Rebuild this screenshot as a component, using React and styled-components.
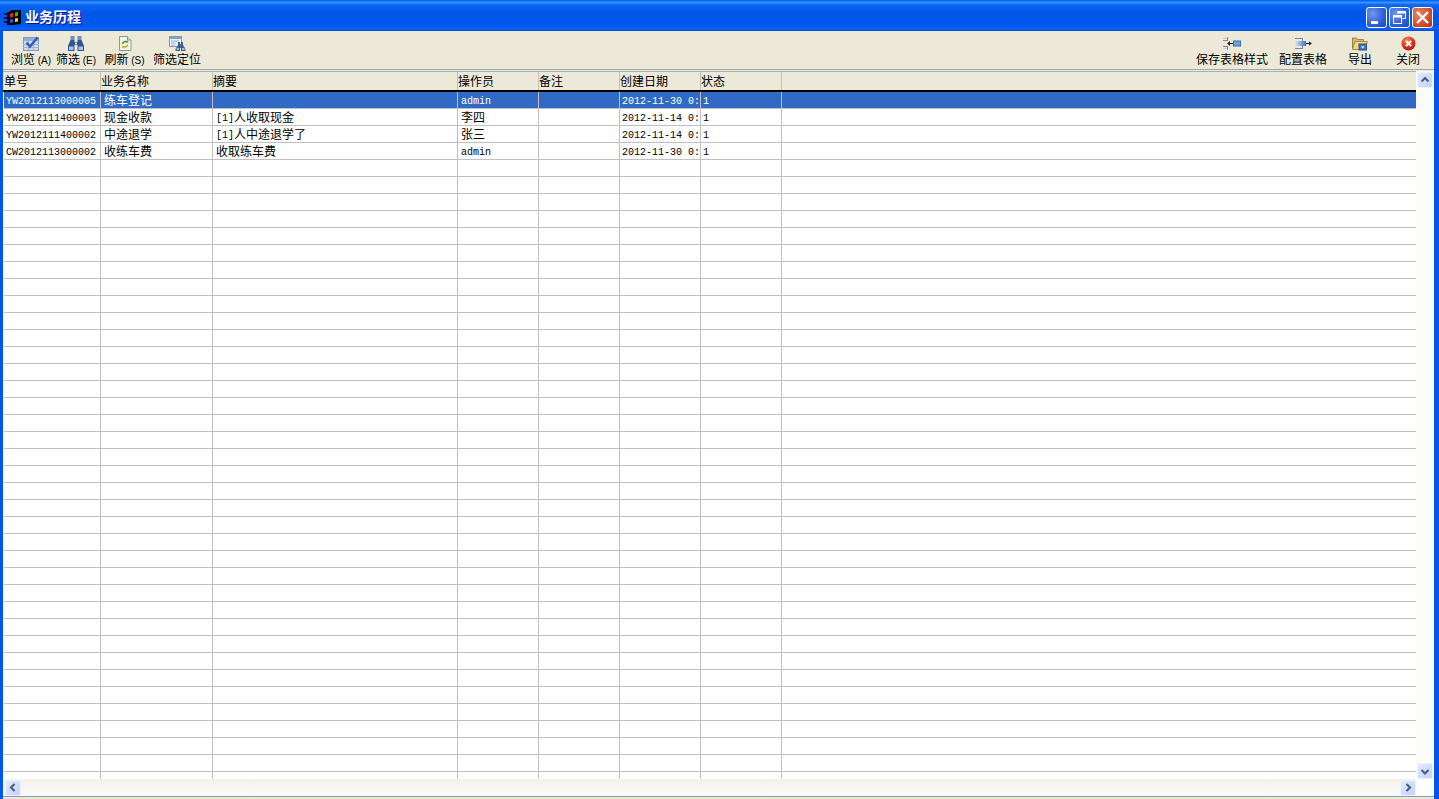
import styled, { createGlobalStyle } from 'styled-components'

const GlobalStyle = createGlobalStyle`
  html, body { margin: 0; padding: 0; height: 100%; overflow: hidden; }
  body { font-family: "Noto Sans CJK SC", "Liberation Sans", sans-serif; font-size: 12px; color: #000; }
`

const columns = [
  { key: 'no', title: '单号', width: 97, pad: 2 },
  { key: 'name', title: '业务名称', width: 112, pad: 3 },
  { key: 'memo', title: '摘要', width: 245, pad: 3 },
  { key: 'op', title: '操作员', width: 81, pad: 3 },
  { key: 'note', title: '备注', width: 81, pad: 2 },
  { key: 'date', title: '创建日期', width: 81, pad: 2 },
  { key: 'state', title: '状态', width: 81, pad: 2 },
]

const rows = [
  { no: 'YW2012113000005', name: '练车登记', memo: '', op: 'admin', note: '', date: '2012-11-30 0:', state: '1' },
  { no: 'YW2012111400003', name: '现金收款', memo: '[1]人收取现金', op: '李四', note: '', date: '2012-11-14 0:', state: '1' },
  { no: 'YW2012111400002', name: '中途退学', memo: '[1]人中途退学了', op: '张三', note: '', date: '2012-11-14 0:', state: '1' },
  { no: 'CW2012113000002', name: '收练车费', memo: '收取练车费', op: 'admin', note: '', date: '2012-11-30 0:', state: '1' },
]

const emptyRows = Array.from({ length: 37 }, (_, i) => i)

// latin parts are set in a 6px-per-char mono so they line up with the cjk text
function Mixed({ text }) {
  const parts = text.split(/([\x20-\x7e]+)/).filter(Boolean)
  return parts.map((p, i) => (/^[\x20-\x7e]+$/.test(p) ? <Latin key={i}>{p}</Latin> : <span key={i}>{p}</span>))
}

const AppIcon = () => (
  <svg width="17" height="15" viewBox="0 0 17 15">
    <path d="M3 3 L8 0 L17 0 L17 14 L9 15 L3 15 Z" fill="#000" />
    <path d="M0 3h3v2H0zM0 7h3v2H0zM0 11h3v2H0z" fill="#0a1a70" />
    <path d="M6 4 L9 2.500 L9 7 L6 7.500 Z" fill="#d8301c" />
    <path d="M11 2.500 L14 2 L14 6 L11 6.500 Z" fill="#30b040" />
    <path d="M6 9.500 L9 9 L9 12.500 L6 13 Z" fill="#2458e0" />
    <path d="M11 8.500 L14 8 L14 11.500 L11 12 Z" fill="#f4dc20" />
  </svg>
)

const BrowseIcon = () => (
  <svg width="16" height="15" viewBox="0 0 16 15">
    <rect x="0.500" y="1.500" width="15" height="13" fill="#cfdcf0" stroke="#7f9db9" />
    <rect x="1" y="2" width="14" height="3" fill="#8fb0dc" />
    <path d="M0 8.500h16M0 11.500h16M5.500 2v12M10.500 2v12" stroke="#9db4d4" />
    <path d="M3.500 6.500 L7 10.500 L14.500 1.500" fill="none" stroke="#3a5fb0" strokeWidth="2.600" />
  </svg>
)

const BinocularsIcon = () => (
  <svg width="16" height="15" viewBox="0 0 16 15">
    <rect x="2.500" y="0" width="4" height="4" fill="#6f8db8" />
    <rect x="9.500" y="0" width="4" height="4" fill="#6f8db8" />
    <path d="M2.500 4h4v2h3V4h4l2.500 6v5H9.500V9h-3v6H0v-5z" fill="#34568e" />
    <rect x="1" y="10.500" width="4.500" height="3.500" fill="#a8c4ea" />
    <rect x="10.500" y="10.500" width="4.500" height="3.500" fill="#a8c4ea" />
    <rect x="7" y="6.500" width="2" height="2" fill="#ccd6e6" />
  </svg>
)

const RefreshIcon = () => (
  <svg width="14" height="15" viewBox="0 0 14 15">
    <path d="M1.500 0.500h8l3.500 3.500v10.500h-11.500z" fill="#f4f4e6" stroke="#8a9a8a" />
    <path d="M9.500 0.500v3.500h3.500" fill="#dfe3d2" stroke="#8a9a8a" />
    <path d="M4.500 8a2.600 2.600 0 0 1 4.400-1.700" fill="none" stroke="#3f9a2a" strokeWidth="1.600" />
    <path d="M9.600 8.600a2.600 2.600 0 0 1-4.400 1.600" fill="none" stroke="#c9a92a" strokeWidth="1.600" />
    <path d="M8 4.800h2.200v2.400z" fill="#3f9a2a" />
    <path d="M6 11.800H3.800V9.400z" fill="#c9a92a" />
  </svg>
)

const LocateIcon = () => (
  <svg width="17" height="15" viewBox="0 0 17 15">
    <rect x="0.500" y="0.500" width="12" height="10" fill="#eef3fa" stroke="#7f9db9" />
    <rect x="1" y="1" width="11" height="2" fill="#7f9fd0" />
    <path d="M2 5h8M2 7h5M2 9h4" stroke="#9fb4d0" />
    <path d="M9 6h2v2h1V6h2v3l2.500 4v2H12v-3h-1v3H6.500v-2L9 9z" fill="#3d5f96" />
    <rect x="7.500" y="12" width="2.500" height="2" fill="#9fbbe0" />
    <rect x="13" y="12" width="2.500" height="2" fill="#9fbbe0" />
  </svg>
)

const SaveStyleIcon = () => (
  <svg width="18" height="13" viewBox="0 0 18 13">
    <path d="M0 3.500h5M4.500 0v3.500M0 9.500h5M4.500 9.500V13" stroke="#7d8796" />
    <path d="M0 1.500h4M0 11.500h4" stroke="#c3cad4" />
    <path d="M5 6.500h5" stroke="#222" />
    <path d="M4 6.500l3-2.500v5z" fill="#222" />
    <rect x="10.500" y="4" width="7" height="5" fill="#6f9fdc" stroke="#3d6cae" />
  </svg>
)

const ConfigIcon = () => (
  <svg width="17" height="13" viewBox="0 0 17 13">
    <path d="M0 1.500h8M7.500 1v4M0 11.500h8M7.500 9v3" stroke="#7d8796" />
    <defs>
      <linearGradient id="cfgbar" x1="0" x2="1" y1="0" y2="0">
        <stop offset="0" stopColor="#dfe9f7" />
        <stop offset="1" stopColor="#3f74bf" />
      </linearGradient>
    </defs>
    <rect x="0" y="4" width="11" height="5" fill="url(#cfgbar)" />
    <path d="M11 6.500h4" stroke="#222" />
    <path d="M17 6.500l-3-2v4z" fill="#222" />
  </svg>
)

const ExportIcon = () => (
  <svg width="16" height="14" viewBox="0 0 16 14">
    <path d="M0.500 13V1.500h4l1 1.500h6v2" fill="#d6b676" stroke="#9a8150" />
    <path d="M0.500 13l2.500-8h12.500l-3 8z" fill="#f8d77c" stroke="#a98a45" />
    <rect x="7" y="7.500" width="7.500" height="6" fill="#3f74c4" stroke="#2a4f8e" />
    <path d="M9 10h3.500l-1.750 2z" fill="#fff" />
  </svg>
)

const CloseIcon = () => (
  <svg width="15" height="15" viewBox="0 0 15 15">
    <defs>
      <radialGradient id="closered" cx="0.400" cy="0.300" r="0.800">
        <stop offset="0" stopColor="#f58a6a" />
        <stop offset="0.550" stopColor="#d8341c" />
        <stop offset="1" stopColor="#a01808" />
      </radialGradient>
    </defs>
    <circle cx="7.500" cy="7.500" r="7" fill="url(#closered)" />
    <path d="M5 5l5 5M10 5l-5 5" stroke="#fff" strokeWidth="2" />
  </svg>
)

function Arrow({ dir }) {
  const d = {
    up: 'M3.500 7.500 L7 4 L10.500 7.500',
    down: 'M3.500 5 L7 8.500 L10.500 5',
    left: 'M8.500 3 L5 6.500 L8.500 10',
    right: 'M5.500 3 L9 6.500 L5.500 10',
  }[dir]
  return (
    <svg width="14" height="13" viewBox="0 0 14 13">
      <path d={d} fill="none" stroke="#4d6185" strokeWidth="2.200" />
    </svg>
  )
}

function App() {
  return (
    <Window>
      <GlobalStyle />
      <TitleBar>
        <AppIcon />
        <Title>业务历程</Title>
        <WinButtons>
          <WinButton>
            <svg width="21" height="21" viewBox="0 0 21 21"><rect x="5" y="14" width="7" height="3" fill="#fff" /></svg>
          </WinButton>
          <WinButton>
            <svg width="21" height="21" viewBox="0 0 21 21">
              <path d="M8.500 6.500V4.500h8v7h-3" fill="none" stroke="#fff" />
              <path d="M8.500 5.500h8" stroke="#fff" strokeWidth="2" />
              <rect x="4.500" y="8.500" width="8" height="8" fill="none" stroke="#fff" />
              <path d="M4.500 9.500h8" stroke="#fff" strokeWidth="2" />
            </svg>
          </WinButton>
          <WinButton $close>
            <svg width="21" height="21" viewBox="0 0 21 21"><path d="M5 5l11 11M16 5L5 16" stroke="#fff" strokeWidth="2.400" /></svg>
          </WinButton>
        </WinButtons>
      </TitleBar>

      <Body>
        <Toolbar>
          <ToolGroup>
            <ToolButton $width={40}><BrowseIcon /><ToolLabel>浏览<Hotkey> (A)</Hotkey></ToolLabel></ToolButton>
            <ToolButton $width={40} $gap={5}><BinocularsIcon /><ToolLabel>筛选<Hotkey> (E)</Hotkey></ToolLabel></ToolButton>
            <ToolButton $width={41} $gap={8}><RefreshIcon /><ToolLabel>刷新<Hotkey> (S)</Hotkey></ToolLabel></ToolButton>
            <ToolButton $width={48} $gap={8}><LocateIcon /><ToolLabel>筛选定位</ToolLabel></ToolButton>
          </ToolGroup>
          <ToolGroup>
            <ToolButton $width={72}><SaveStyleIcon /><ToolLabel>保存表格样式</ToolLabel></ToolButton>
            <ToolButton $width={48} $gap={11}><ConfigIcon /><ToolLabel>配置表格</ToolLabel></ToolButton>
            <ToolButton $width={24} $gap={21}><ExportIcon /><ToolLabel>导出</ToolLabel></ToolButton>
            <ToolButton $width={24} $gap={24}><CloseIcon /><ToolLabel>关闭</ToolLabel></ToolButton>
          </ToolGroup>
        </Toolbar>

        <GridArea>
          <Table>
            <HeaderRow>
              {columns.map((c) => (
                <HeaderCell key={c.key} $width={c.width}>{c.title}</HeaderCell>
              ))}
            </HeaderRow>
            {rows.map((r, i) => (
              <Row key={r.no} $selected={i === 0}>
                {columns.map((c) => (
                  <Cell key={c.key} $width={c.width} $pad={c.pad}>
                    <Mixed text={r[c.key]} />
                  </Cell>
                ))}
              </Row>
            ))}
            {emptyRows.map((n) => (
              <Row key={n}>
                {columns.map((c) => (
                  <Cell key={c.key} $width={c.width} $pad={c.pad} />
                ))}
              </Row>
            ))}
          </Table>

          <VScroll>
            <ScrollButton><Arrow dir="up" /></ScrollButton>
            <ScrollButton><Arrow dir="down" /></ScrollButton>
          </VScroll>

          <HScroll>
            <ScrollButton><Arrow dir="left" /></ScrollButton>
            <ScrollButton><Arrow dir="right" /></ScrollButton>
          </HScroll>
          <Corner />
        </GridArea>
        <BottomEdge />
      </Body>
    </Window>
  )
}

const Window = styled.div`
  width: 1439px;
  height: 799px;
  display: flex;
  flex-direction: column;
  overflow: hidden;
  background: #0055ea;
`

const TitleBar = styled.div`
  height: 31px;
  flex: none;
  box-sizing: border-box;
  display: flex;
  align-items: center;
  padding: 3px 6px 0 4px;
  background: linear-gradient(180deg, #0058ee 0, #3593ff 8%, #0a66f0 16%, #0055e5 45%, #0058ee 85%, #0a66f8 93%, #0049d0 100%);
`

const Title = styled.div`
  margin: -2px 0 0 4px;
  color: #fff;
  font-size: 14px;
  font-weight: 700;
  line-height: 16px;
  text-shadow: 1px 1px 0 #0f1089;
`

const WinButtons = styled.div`
  margin-left: auto;
  display: flex;
  gap: 2px;
`

const WinButton = styled.div`
  width: 21px;
  height: 21px;
  box-sizing: border-box;
  border: 1px solid #fff;
  border-radius: 3px;
  overflow: hidden;
  display: flex;
  background: ${(p) =>
    p.$close
      ? 'radial-gradient(circle at 30% 30%, #e9876a, #d6512d 55%, #b92e10)'
      : 'radial-gradient(circle at 30% 30%, #6f95ee, #2e5fdc 60%, #1f43b8)'};

  svg {
    flex: none;
    margin: -1px;
  }
`

const Body = styled.div`
  flex: 1;
  min-height: 0;
  margin: 0 5px 0 3px;
  display: flex;
  flex-direction: column;
  background: #ece9d8;
`

const Toolbar = styled.div`
  height: 39px;
  flex: none;
  box-sizing: border-box;
  display: flex;
  justify-content: space-between;
  padding: 5px 14px 0 8px;
  border-bottom: 1px solid #aca899;
`

const ToolGroup = styled.div`
  display: flex;
`

const ToolButton = styled.div`
  width: ${(p) => p.$width}px;
  margin-left: ${(p) => p.$gap || 0}px;
  display: flex;
  flex-direction: column;
  align-items: center;

  svg {
    flex: none;
    height: 15px;
  }
`

const ToolLabel = styled.div`
  margin-top: -1px;
  height: 18px;
  line-height: 18px;
  white-space: nowrap;
  font-size: 12px;
`

const Hotkey = styled.span`
  font-family: "Liberation Sans", sans-serif;
  font-size: 10px;
`

const GridArea = styled.div`
  flex: 1;
  min-height: 0;
  display: grid;
  grid-template-columns: 1fr 18px;
  grid-template-rows: 1fr 17px;
  margin-top: 1px;
`

const Table = styled.div`
  overflow: hidden;
  min-width: 0;
  min-height: 0;
  padding-left: 1px;
  background: #fff;
  border-top: 1px solid #9db4c8;
`

const HeaderRow = styled.div`
  height: 18px;
  margin-left: -1px;
  padding-left: 1px;
  display: flex;
  background: #ece9d8;
  border-bottom: 2px solid #000;
  box-sizing: content-box;
`

const HeaderCell = styled.div`
  width: ${(p) => p.$width}px;
  flex: none;
  box-sizing: border-box;
  line-height: 17px;
  height: 18px;
  border-right: 1px solid #c4c1b0;
  white-space: nowrap;
`

const Row = styled.div`
  height: 17px;
  box-sizing: border-box;
  display: flex;
  border-bottom: 1px solid #c0c0c0;
  background: ${(p) => (p.$selected ? '#316ac5' : '#fff')};
  color: ${(p) => (p.$selected ? '#fff' : '#000')};
`

const Cell = styled.div`
  width: ${(p) => p.$width}px;
  flex: none;
  box-sizing: border-box;
  padding-left: ${(p) => p.$pad}px;
  line-height: 16px;
  height: 16px;
  border-right: 1px solid #c0c0c0;
  white-space: nowrap;
  overflow: hidden;
`

const Latin = styled.span`
  font-family: "Liberation Mono", monospace;
  font-size: 10px;
  vertical-align: 1px;
`

const VScroll = styled.div`
  background: #fbfbf8;
  display: flex;
  flex-direction: column;
  justify-content: space-between;
  align-items: flex-start;
  padding: 1px 0 0 1px;
`

const HScroll = styled.div`
  background: linear-gradient(180deg, #f3f1ec, #fbfbf8);
  display: flex;
  justify-content: space-between;
  align-items: center;
  padding-left: 2px;
`

const ScrollButton = styled.div`
  width: 16px;
  height: 16px;
  flex: none;
  box-sizing: border-box;
  border: 1px solid #eef3fb;
  border-radius: 2px;
  background: linear-gradient(135deg, #e1eafe, #c1d3fb);
  display: flex;
  align-items: center;
  justify-content: center;
`

const Corner = styled.div`
  background: #fff;
`

const BottomEdge = styled.div`
  height: 3px;
  flex: none;
  box-sizing: border-box;
  border-top: 1px solid #7f9db9;
  background: #ece9d8;
`

export default App
